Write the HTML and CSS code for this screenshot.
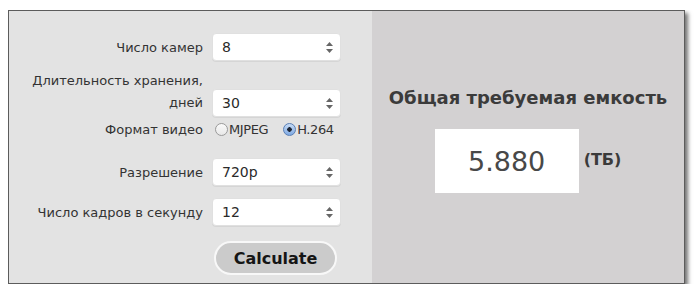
FILE: index.html
```html
<!DOCTYPE html>
<html lang="ru">
  <head>
    <meta charset="UTF-8" />
    <title>Калькулятор архива</title>
    <link rel="stylesheet" href="styles.css">
  </head>
  <body>
    <div class="calc">
      <!-- Form -->
      <div class="calc-form">
        <div class="row row-first">
          <label class="label">Число камер</label>
          <div class="select-wrap">
            <select class="select"><option>8</option></select>
            <svg class="arrows" width="7" height="11" viewBox="0 0 7 11"><path d="M3.5 0L7 4H0z M3.5 11L0 7h7z" fill="#666"/></svg>
          </div>
        </div>
        <div class="row row-days">
          <label class="label label-two">Длительность хранения,<br />дней</label>
          <div class="select-wrap">
            <select class="select"><option>30</option></select>
            <svg class="arrows" width="7" height="11" viewBox="0 0 7 11"><path d="M3.5 0L7 4H0z M3.5 11L0 7h7z" fill="#666"/></svg>
          </div>
        </div>
        <div class="row row-format">
          <label class="label">Формат видео</label>
          <div class="radios">
            <span class="radio"></span><span class="radio-text">MJPEG</span>
            <span class="radio checked"></span><span class="radio-text">H.264</span>
          </div>
        </div>
        <div class="row row-res">
          <label class="label">Разрешение</label>
          <div class="select-wrap">
            <select class="select"><option>720p</option></select>
            <svg class="arrows" width="7" height="11" viewBox="0 0 7 11"><path d="M3.5 0L7 4H0z M3.5 11L0 7h7z" fill="#666"/></svg>
          </div>
        </div>
        <div class="row row-fps">
          <label class="label">Число кадров в секунду</label>
          <div class="select-wrap">
            <select class="select"><option>12</option></select>
            <svg class="arrows" width="7" height="11" viewBox="0 0 7 11"><path d="M3.5 0L7 4H0z M3.5 11L0 7h7z" fill="#666"/></svg>
          </div>
        </div>
        <div class="row row-btn">
          <span class="label"></span>
          <button class="calc-btn">Calculate</button>
        </div>
      </div>

      <!-- Result -->
      <div class="calc-result">
        <h2>Общая требуемая емкость</h2>
        <div class="result-row">
          <div class="result-box">5.880</div>
          <span class="result-unit">(ТБ)</span>
        </div>
      </div>
    </div>
  </body>
</html>
```

FILE: styles.css
```css
body {
  font-family: "DejaVu Sans", "Liberation Sans", sans-serif;
  margin: 10px 0 0 8px;
  background-color: white;
}
.calc {
  width: 675px;
  height: 272px;
  display: flex;
  border: 1px solid #5c5c5c;
  box-shadow: 3px 3px 4px rgba(0, 0, 0, 0.55);
}
/* Form styling */
.calc-form {
  width: 363px;
  background-color: #e3e3e3;
  padding-top: 22px;
  box-sizing: border-box;
}
.row {
  display: flex;
  align-items: center;
  column-gap: 9px;
}
.label {
  width: 194px;
  text-align: right;
  font-size: 13px;
  color: #333;
  flex-shrink: 0;
}
.row-days {
  margin-top: 9px;
  align-items: flex-end;
}
.label-two {
  line-height: 22px;
  padding-bottom: 3px;
}
.row-format {
  margin-top: 2px;
  height: 20px;
}
.row-res {
  margin-top: 19px;
}
.row-fps {
  margin-top: 12px;
}
.row-btn {
  margin-top: 15px;
}
.select-wrap {
  position: relative;
  width: 129px;
  height: 28px;
}
.select {
  appearance: none;
  -webkit-appearance: none;
  width: 100%;
  height: 100%;
  border: 1px solid #e0e0e0;
  border-radius: 4px;
  background-color: white;
  font-family: inherit;
  font-size: 14px;
  color: #2a2a2a;
  padding: 0 9px;
  box-shadow: 0 1px 0 rgba(0, 0, 0, 0.06);
}
.arrows {
  position: absolute;
  right: 8px;
  top: 9px;
}
.radios {
  display: flex;
  align-items: center;
  font-size: 13px;
  color: #333;
}
.radio-text {
  letter-spacing: -0.4px;
}
.radio {
  width: 11px;
  height: 11px;
  border-radius: 50%;
  border: 1px solid #9a9a9a;
  background: linear-gradient(#fafafa, #e8e8e8);
  margin-left: 3px;
  margin-right: 1px;
}
.radio.checked {
  margin-left: 15px;
  border-color: #5a7fb5;
  background: radial-gradient(circle, #1d2533 0 2px, transparent 2.5px),
    linear-gradient(#c8dcf5, #7ea9e3);
}
.calc-btn {
  width: 123px;
  height: 34px;
  margin-left: 2px;
  border: 2px solid #f8f8f8;
  border-radius: 17px;
  background-color: #cbcbcb;
  font-family: inherit;
  font-size: 16px;
  font-weight: bold;
  color: #151515;
  cursor: pointer;
}
/* Result styling */
.calc-result {
  flex-grow: 1;
  background-color: #d3d1d2;
  display: flex;
  flex-direction: column;
  align-items: center;
  padding-top: 76px;
}
.calc-result h2 {
  margin: 0;
  font-size: 18px;
  color: #3b3b3b;
}
.result-row {
  display: flex;
  align-items: center;
  margin-top: 21px;
  column-gap: 5px;
}
.result-box {
  width: 144px;
  height: 64px;
  background-color: white;
  display: flex;
  align-items: center;
  justify-content: center;
  font-size: 27px;
  color: #484848;
}
.result-unit {
  font-size: 16px;
  font-weight: bold;
  color: #3b3b3b;
  margin-top: -4px;
}
```
